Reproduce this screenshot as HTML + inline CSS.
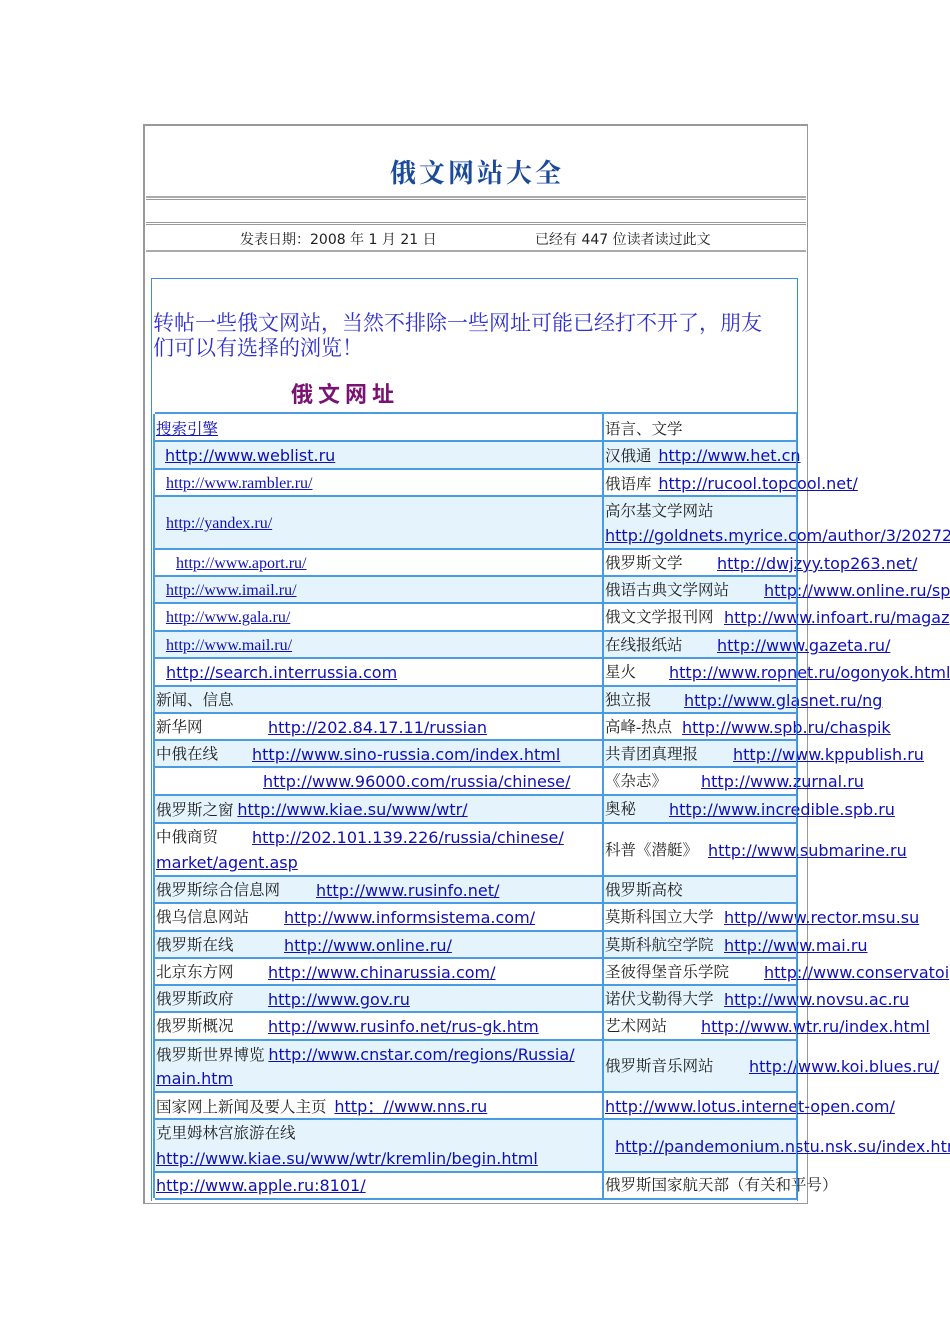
<!DOCTYPE html>
<html><head><meta charset="utf-8"><style>
body{margin:0;background:#fff;width:950px;height:1344px;position:relative;overflow:hidden;font-family:"Liberation Serif","Noto Serif CJK SC",serif}
.a{position:absolute;white-space:nowrap}
.hl{position:absolute;left:146px;width:660px;height:1px;background:#999}
.cj{font-family:"Liberation Serif","Noto Serif CJK SC",serif;font-size:15.5px;color:#222}
.u{font-family:"DejaVu Sans","Liberation Sans",sans-serif;font-size:16px;color:#1010b8;text-decoration:underline}
.s{font-family:"Liberation Serif",serif;font-size:16px;color:#1010b8;text-decoration:underline}
.row{position:absolute;left:155px;width:642px;border-top:2px solid #4a9ce0}
.row.b{background:#e4f3fc}
.t{position:absolute;white-space:nowrap;line-height:20px}
</style></head><body>
<div class="a" style="left:143px;top:124px;width:662px;height:1077px;border:1px solid #999;border-width:2px 1px 1px 2px"></div>
<div class="a" style="left:390px;top:153px;font-family:'Noto Serif CJK SC',serif;font-weight:bold;font-size:26px;color:#1b4a9a;letter-spacing:3px">俄文网站大全</div>
<div class="hl" style="top:196px;height:2px;background:#aaa"></div>
<div class="hl" style="top:199px"></div>
<div class="hl" style="top:222px"></div>
<div class="hl" style="top:224px"></div>
<div class="a cj" style="left:240px;top:229px;font-size:14px">发表日期：<span style="font-family:'DejaVu Sans',sans-serif">2008 </span>年<span style="font-family:'DejaVu Sans',sans-serif"> 1 </span>月<span style="font-family:'DejaVu Sans',sans-serif"> 21 </span>日</div>
<div class="a cj" style="left:535px;top:229px;font-size:14px">已经有<span style="font-family:'DejaVu Sans',sans-serif"> 447 </span>位读者读过此文</div>
<div class="hl" style="top:250px;height:2px;background:#aaa"></div>
<div class="a" style="left:151px;top:278px;width:645px;height:922px;border:1px solid #3a8ee0;border-bottom:0"></div>
<div class="a" style="left:153px;top:310px;font-family:'Noto Serif CJK SC',serif;font-size:21px;color:#3030d0;line-height:25px">转帖一些俄文网站，当然不排除一些网址可能已经打不开了，朋友<br>们可以有选择的浏览！</div>
<div class="a" style="left:291px;top:377px;font-family:'Noto Sans CJK SC',sans-serif;font-weight:bold;font-size:22px;color:#7a1274;letter-spacing:5px">俄文网址</div>

<div class="row" style="top:412px;height:28px"><span class="t cj" style="left:1px;top:6px;color:#1010b8;text-decoration:underline">搜索引擎</span><span class="t cj" style="left:450px;top:6px">语言、文学</span></div>
<div class="row b" style="top:440px;height:26px"><span class="t u" style="left:10px;top:4px">http://www.weblist.ru</span><span class="t cj" style="left:450px;top:4px">汉俄通 <span class="u" style="margin-left:3px">http://www.het.cn</span></span></div>
<div class="row" style="top:468px;height:25px"><span class="t s" style="left:11px;top:4px">http://www.rambler.ru/</span><span class="t cj" style="left:450px;top:4px">俄语库 <span class="u" style="margin-left:3px">http://rucool.topcool.net/</span></span></div>
<div class="row b" style="top:495px;height:51px"><span class="t s" style="left:11px;top:17px">http://yandex.ru/</span><span class="t cj" style="left:450px;top:5px">高尔基文学网站</span><span class="t u" style="left:450px;top:29px">http://goldnets.myrice.com/author/3/20272</span></div>
<div class="row" style="top:548px;height:25px"><span class="t s" style="left:21px;top:4px">http://www.aport.ru/</span><span class="t cj" style="left:450px;top:4px">俄罗斯文学</span><span class="t u" style="left:562px;top:4px">http://dwjzyy.top263.net/</span></div>
<div class="row b" style="top:575px;height:25px"><span class="t s" style="left:11px;top:4px">http://www.imail.ru/</span><span class="t cj" style="left:450px;top:4px">俄语古典文学网站</span><span class="t u" style="left:609px;top:4px">http://www.online.ru/sp</span></div>
<div class="row" style="top:602px;height:26px"><span class="t s" style="left:11px;top:4px">http://www.gala.ru/</span><span class="t cj" style="left:450px;top:4px">俄文文学报刊网</span><span class="t u" style="left:569px;top:4px">http://www.infoart.ru/magaz</span></div>
<div class="row b" style="top:630px;height:25px"><span class="t s" style="left:11px;top:4px">http://www.mail.ru/</span><span class="t cj" style="left:450px;top:4px">在线报纸站</span><span class="t u" style="left:562px;top:4px">http://www.gazeta.ru/</span></div>
<div class="row" style="top:657px;height:26px"><span class="t u" style="left:11px;top:4px">http://search.interrussia.com </span><span class="t cj" style="left:450px;top:4px">星火</span><span class="t u" style="left:514px;top:4px">http://www.ropnet.ru/ogonyok.html</span></div>
<div class="row b" style="top:685px;height:25px"><span class="t cj" style="left:1px;top:4px">新闻、信息</span><span class="t cj" style="left:450px;top:4px">独立报</span><span class="t u" style="left:529px;top:4px">http://www.glasnet.ru/ng</span></div>
<div class="row" style="top:712px;height:25px"><span class="t cj" style="left:1px;top:4px">新华网</span><span class="t u" style="left:113px;top:4px">http://202.84.17.11/russian</span><span class="t cj" style="left:450px;top:4px">高峰-热点</span><span class="t u" style="left:527px;top:4px">http://www.spb.ru/chaspik</span></div>
<div class="row b" style="top:739px;height:25px"><span class="t cj" style="left:1px;top:4px">中俄在线</span><span class="t u" style="left:97px;top:4px">http://www.sino-russia.com/index.html</span><span class="t cj" style="left:450px;top:4px">共青团真理报</span><span class="t u" style="left:578px;top:4px">http://www.kppublish.ru</span></div>
<div class="row" style="top:766px;height:26px"><span class="t u" style="left:108px;top:4px">http://www.96000.com/russia/chinese/ </span><span class="t cj" style="left:450px;top:4px">《杂志》</span><span class="t u" style="left:546px;top:4px">http://www.zurnal.ru</span></div>
<div class="row b" style="top:794px;height:26px"><span class="t cj" style="left:1px;top:4px">俄罗斯之窗 <span class="u">http://www.kiae.su/www/wtr/</span></span><span class="t cj" style="left:450px;top:4px">奥秘</span><span class="t u" style="left:514px;top:4px">http://www.incredible.spb.ru</span></div>
<div class="row" style="top:822px;height:51px"><span class="t cj" style="left:1px;top:4px">中俄商贸</span><span class="t u" style="left:97px;top:4px">http://202.101.139.226/russia/chinese/</span><span class="t u" style="left:1px;top:29px">market/agent.asp</span><span class="t cj" style="left:450px;top:17px">科普《潜艇》</span><span class="t u" style="left:553px;top:17px">http://www.submarine.ru</span></div>
<div class="row b" style="top:875px;height:25px"><span class="t cj" style="left:1px;top:4px">俄罗斯综合信息网</span><span class="t u" style="left:161px;top:4px">http://www.rusinfo.net/</span><span class="t cj" style="left:450px;top:4px">俄罗斯高校</span></div>
<div class="row" style="top:902px;height:26px"><span class="t cj" style="left:1px;top:4px">俄乌信息网站</span><span class="t u" style="left:129px;top:4px">http://www.informsistema.com/</span><span class="t cj" style="left:450px;top:4px">莫斯科国立大学</span><span class="t u" style="left:569px;top:4px">http//www.rector.msu.su</span></div>
<div class="row b" style="top:930px;height:25px"><span class="t cj" style="left:1px;top:4px">俄罗斯在线</span><span class="t u" style="left:129px;top:4px">http://www.online.ru/</span><span class="t cj" style="left:450px;top:4px">莫斯科航空学院</span><span class="t u" style="left:569px;top:4px">http://www.mai.ru</span></div>
<div class="row" style="top:957px;height:25px"><span class="t cj" style="left:1px;top:4px">北京东方网</span><span class="t u" style="left:113px;top:4px">http://www.chinarussia.com/</span><span class="t cj" style="left:450px;top:4px">圣彼得堡音乐学院</span><span class="t u" style="left:609px;top:4px">http://www.conservatoi</span></div>
<div class="row b" style="top:984px;height:25px"><span class="t cj" style="left:1px;top:4px">俄罗斯政府</span><span class="t u" style="left:113px;top:4px">http://www.gov.ru</span><span class="t cj" style="left:450px;top:4px">诺伏戈勒得大学</span><span class="t u" style="left:569px;top:4px">http://www.novsu.ac.ru</span></div>
<div class="row" style="top:1011px;height:26px"><span class="t cj" style="left:1px;top:4px">俄罗斯概况</span><span class="t u" style="left:113px;top:4px">http://www.rusinfo.net/rus-gk.htm </span><span class="t cj" style="left:450px;top:4px">艺术网站</span><span class="t u" style="left:546px;top:4px">http://www.wtr.ru/index.html</span></div>
<div class="row b" style="top:1039px;height:50px"><span class="t cj" style="left:1px;top:4px">俄罗斯世界博览 <span class="u">http://www.cnstar.com/regions/Russia/</span></span><span class="t u" style="left:1px;top:28px">main.htm</span><span class="t cj" style="left:450px;top:16px">俄罗斯音乐网站</span><span class="t u" style="left:594px;top:16px">http://www.koi.blues.ru/</span></div>
<div class="row" style="top:1091px;height:25px"><span class="t cj" style="left:1px;top:4px">国家网上新闻及要人主页 <span class="u" style="margin-left:4px">http：//www.nns.ru</span></span><span class="t u" style="left:450px;top:4px">http://www.lotus.internet-open.com/</span></div>
<div class="row b" style="top:1118px;height:51px"><span class="t cj" style="left:1px;top:4px">克里姆林宫旅游在线</span><span class="t u" style="left:1px;top:29px">http://www.kiae.su/www/wtr/kremlin/begin.html</span><span class="t u" style="left:460px;top:17px">http://pandemonium.nstu.nsk.su/index.htm</span></div>
<div class="row" style="top:1171px;height:25px;border-bottom:2px solid #4a9ce0"><span class="t u" style="left:1px;top:3px">http://www.apple.ru:8101/</span><span class="t cj" style="left:450px;top:3px">俄罗斯国家航天部（有关和平号）</span></div>
<div class="a" style="left:602px;top:414px;width:2px;height:784px;background:#4a9ce0"></div>
<div class="a" style="left:153px;top:414px;width:2px;height:784px;background:#4a9ce0"></div>
<div class="a" style="left:796px;top:414px;width:1px;height:784px;background:#4a9ce0"></div>
</body></html>
